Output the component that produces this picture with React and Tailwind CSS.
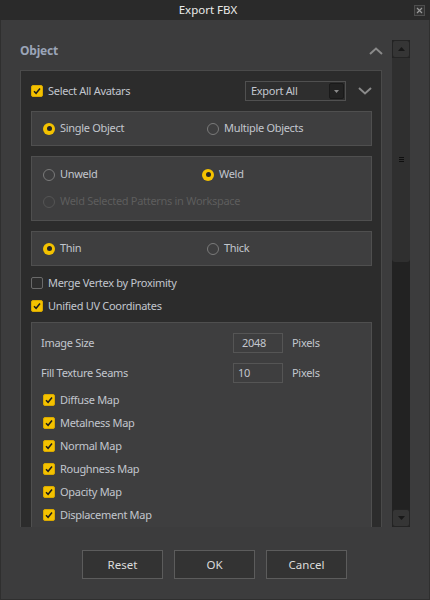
import React from 'react';

const Check = ({ checked }) => (
  <span
    className={`w-[12px] h-[12px] rounded-[2px] flex items-center justify-center shrink-0 ${
      checked ? 'bg-[#f4c200] border border-[#d9a900]' : 'bg-[#2e2e2e] border border-[#6a6a6a]'
    }`}
  >
    {checked && (
      <svg width="10" height="10" viewBox="0 0 10 10">
        <path d="M2 5.2 L4.1 7.3 L8 2.6" fill="none" stroke="#1c1c1c" strokeWidth="1.5" />
      </svg>
    )}
  </span>
);

const Radio = ({ on, disabled }) => (
  <span
    className={`w-[12px] h-[12px] rounded-full flex items-center justify-center shrink-0 ${
      on ? 'bg-[#f4c200]' : disabled ? 'border border-[#555]' : 'border border-[#7a7a7a]'
    }`}
  >
    {on && <span className="w-[5px] h-[5px] rounded-full bg-[#262626]" />}
  </span>
);

const CheckRow = ({ label, checked, className = '' }) => (
  <div className={`flex items-center h-[16px] ${className}`}>
    <Check checked={checked} />
    <span className="ml-[5px]">{label}</span>
  </div>
);

const RadioItem = ({ label, on, disabled }) => (
  <div className={`flex items-center h-[15px] ${disabled ? 'text-[#5d5d5d]' : ''}`}>
    <Radio on={on} disabled={disabled} />
    <span className="ml-[5px]">{label}</span>
  </div>
);

const Box = ({ children, className = '' }) => (
  <div className={`bg-[#3e3e3f] border border-[#4f4f4f] ${className}`}>{children}</div>
);

const Chevron = ({ up }) => (
  <svg width="14" height="8" viewBox="0 0 14 8">
    <path
      d={up ? 'M1 7 L7 1.5 L13 7' : 'M1 1 L7 6.5 L13 1'}
      fill="none"
      stroke="#8a8a8a"
      strokeWidth="2"
    />
  </svg>
);

const maps = ['Diffuse Map', 'Metalness Map', 'Normal Map', 'Roughness Map', 'Opacity Map', 'Displacement Map'];

export default function App() {
  return (
    <div className="w-[430px] h-[600px] flex flex-col bg-[#3c3c3d] text-[#c2c6ce] text-[11px] tracking-[-0.3px] font-['Noto_Sans',sans-serif] select-none">
      {/* title bar */}
      <div className="h-[20px] bg-[#2a2a2a] flex items-center relative shrink-0">
        <div className="flex-1 text-center pr-[14px] text-[#eaeaea] text-[11.5px] tracking-normal">Export FBX</div>
        <div className="absolute right-[5px] top-[5px] w-[11px] h-[11px] border border-[#4e4e4e] bg-[#333] flex items-center justify-center">
          <svg width="7" height="7" viewBox="0 0 7 7">
            <path d="M1 1 L6 6 M6 1 L1 6" stroke="#9a9a9a" strokeWidth="1.2" />
          </svg>
        </div>
      </div>

      <div className="flex-1 flex flex-col border-x border-b border-[#2f2f2f]">
        <div className="flex pl-[19px] pt-[20px]">
          <div className="w-[362px] flex flex-col">
            <div className="h-[22px] flex items-center justify-between">
              <span className="font-bold text-[12px] text-[#9ba5b8] tracking-[-0.2px]">Object</span>
              <span className="mr-[-1px]"><Chevron up /></span>
            </div>
            <div className="mt-[8px] h-[457px] overflow-hidden bg-[#2c2c2c] border-x border-t border-[#4a4a4a] pl-[10px] pr-[9px]">
              {/* select all */}
              <div className="mt-[10px] h-[20px] flex items-center">
                <Check checked />
                <span className="ml-[5px]">Select All Avatars</span>
                <div className="ml-auto w-[101px] h-[20px] border border-[#505050] bg-[#2e2e2e] flex items-center pl-[5px] pr-[1px]">
                  <span className="flex-1">Export All</span>
                  <span className="w-[15px] h-[16px] rounded-[2px] bg-[#222] border border-[#1a1a1a] flex items-center justify-center">
                    <svg width="5" height="3" viewBox="0 0 5 3"><path d="M0 0 L5 0 L2.5 3 Z" fill="#8a8a8a" /></svg>
                  </span>
                </div>
                <span className="ml-[12px] w-[14px] flex justify-center"><Chevron /></span>
              </div>

              <Box className="mt-[10px] h-[35px] grid grid-cols-[164px_1fr] items-center pl-[11px]">
                <RadioItem label="Single Object" on />
                <RadioItem label="Multiple Objects" />
              </Box>

              <Box className="mt-[10px] h-[65px] pl-[11px] pt-[10px]">
                <div className="grid grid-cols-[159px_1fr]">
                  <RadioItem label="Unweld" />
                  <RadioItem label="Weld" on />
                </div>
                <div className="mt-[12px]">
                  <RadioItem label="Weld Selected Patterns in Workspace" disabled />
                </div>
              </Box>

              <Box className="mt-[10px] h-[35px] grid grid-cols-[164px_1fr] items-center pl-[11px]">
                <RadioItem label="Thin" on />
                <RadioItem label="Thick" />
              </Box>

              <CheckRow label="Merge Vertex by Proximity" className="mt-[9px]" />
              <CheckRow label="Unified UV Coordinates" checked className="mt-[7px]" />

              <Box className="mt-[8px] pl-[9px] pt-[10px] pb-[12px]">
                <div className="flex items-center h-[20px]">
                  <span className="w-[192px]">Image Size</span>
                  <span className="w-[50px] h-[20px] border border-[#555] flex items-center pl-[8px]">2048</span>
                  <span className="ml-[9px]">Pixels</span>
                </div>
                <div className="flex items-center h-[20px] mt-[10px]">
                  <span className="w-[192px]">Fill Texture Seams</span>
                  <span className="w-[50px] h-[20px] border border-[#555] flex items-center pl-[4px]">10</span>
                  <span className="ml-[9px]">Pixels</span>
                </div>
                {maps.map((m, i) => (
                  <CheckRow key={m} label={m} checked className={`ml-[2px] ${i === 0 ? 'mt-[9px]' : 'mt-[7px]'}`} />
                ))}
              </Box>
            </div>
          </div>

          {/* scrollbar */}
          <div className="ml-[10px] w-[18px] h-[487px] flex flex-col bg-[#222]">
            <div className="h-[18px] rounded-[3px] bg-[#353535] border border-[#242424] flex items-center justify-center">
              <svg width="7" height="4" viewBox="0 0 7 4"><path d="M0 4 L7 4 L3.5 0 Z" fill="#181818" /></svg>
            </div>
            <div className="flex-1 flex flex-col">
              <div className="h-[204px] rounded-b-[3px] bg-[#2f2f2f] flex items-center justify-center">
                <svg width="5" height="6" viewBox="0 0 5 6">
                  <path d="M0 0.5 H5 M0 2.5 H5 M0 4.5 H5" stroke="#0f0f0f" strokeWidth="1" />
                </svg>
              </div>
            </div>
            <div className="h-[18px] rounded-[3px] bg-[#353535] border border-[#242424] flex items-center justify-center">
              <svg width="7" height="4" viewBox="0 0 7 4"><path d="M0 0 L7 0 L3.5 4 Z" fill="#181818" /></svg>
            </div>
          </div>
        </div>

        <div className="mt-[23px] flex gap-[11px] pl-[81px]">
          {['Reset', 'OK', 'Cancel'].map(b => (
            <button
              key={b}
              className="w-[81px] h-[29px] bg-[#333] border border-[#5c5c5c] text-[#dcdcdc] text-[11.5px] tracking-normal"
            >
              {b}
            </button>
          ))}
        </div>
      </div>
    </div>
  );
}
